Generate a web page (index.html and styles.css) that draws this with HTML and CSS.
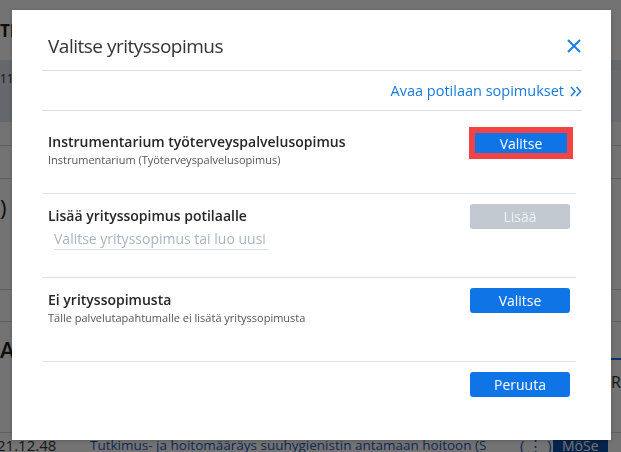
FILE: index.html
```html
<!DOCTYPE html>
<html lang="fi">
<head>
    <meta charset="UTF-8">
    <meta name="viewport" content="width=device-width, initial-scale=1.0">
    <title>Valitse yrityssopimus</title>
    <link rel="stylesheet" href="styles.css">
</head>
<body>
    <main class="page">
        <header class="page-head">
            <h1 class="page-title">TE</h1>
        </header>
        <section class="page-panel">
            <span class="panel-date">11.11.2021</span>
            <span class="panel-tab"></span>
        </section>
        <div class="page-row h23"></div>
        <div class="page-row h33"></div>
        <div class="page-row h110"><span class="page-big">(Ajanvaraus)</span></div>
        <div class="page-row h31"></div>
        <div class="page-row h110">
            <span class="page-big bold">Asiakirjat</span>
            <span class="page-tabs">Re</span>
        </div>
        <div class="page-entry">
            <span class="entry-time">21.12.48</span>
            <a class="entry-link" href="#">Tutkimus- ja hoitomääräys suuhygienistin antamaan hoitoon (S</a>
            <span class="entry-menu">( &#8942; )</span>
            <span class="entry-badge">MöSe</span>
        </div>
    </main>

    <div class="backdrop"></div>

    <section class="modal">
        <div class="modal-head">
            <h2 class="modal-title">Valitse yrityssopimus</h2>
            <button class="modal-close" aria-label="Sulje">
                <svg width="14" height="14" viewBox="0 0 14 14">
                    <path d="M1 1 L13 13 M13 1 L1 13" stroke="#1a7fe6" stroke-width="2" fill="none"/>
                </svg>
            </button>
        </div>
        <div class="modal-link">
            <a href="#">Avaa potilaan sopimukset
                <svg class="chev" width="12" height="11" viewBox="0 0 12 11">
                    <path d="M1 1 L5 5.5 L1 10 M6.5 1 L10.5 5.5 L6.5 10" stroke="#1a7ad8" stroke-width="1.5" fill="none"/>
                </svg>
            </a>
        </div>

        <div class="option first">
            <div class="option-text">
                <div class="option-title">Instrumentarium työterveyspalvelusopimus</div>
                <div class="option-sub">Instrumentarium (Työterveyspalvelusopimus)</div>
            </div>
            <button class="btn focused">Valitse</button>
        </div>

        <div class="option">
            <div class="option-text">
                <div class="option-title">Lisää yrityssopimus potilaalle</div>
                <input class="option-input" type="text" placeholder="Valitse yrityssopimus tai luo uusi">
            </div>
            <button class="btn disabled">Lisää</button>
        </div>

        <div class="option">
            <div class="option-text">
                <div class="option-title">Ei yrityssopimusta</div>
                <div class="option-sub">Tälle palvelutapahtumalle ei lisätä yrityssopimusta</div>
            </div>
            <button class="btn">Valitse</button>
        </div>

        <div class="modal-foot">
            <button class="btn">Peruuta</button>
        </div>
    </section>
</body>
</html>
```

FILE: styles.css
```css
body{
    margin: 0;
    font-family: "Open Sans", "Noto Sans", sans-serif;
    background-color: white;
    overflow: hidden;
}

/* page behind the dialog */

.page{
    width: 621px;
    height: 452px;
}

.page-head{
    height: 60px;
    display: flex;
    align-items: center;
    box-sizing: border-box;
}

.page-title{
    margin: 0;
    font-size: 17px;
    font-weight: 700;
    color: #222;
}

.page-panel{
    height: 62px;
    background-color: #dde5ef;
    display: flex;
    justify-content: space-between;
    padding-top: 10px;
    box-sizing: border-box;
}

.panel-date{
    font-size: 12px;
    color: #333;
}

.panel-tab{
    width: 10px;
    background-color: #e8eef5;
}

.page-row{
    border-bottom: 1px solid #d4d4d4;
    display: flex;
    justify-content: space-between;
    align-items: flex-start;
}

.h23{ height: 23px; }
.h33{ height: 32px; }
.h31{ height: 31px; }
.h110{ height: 110px; }

.page-big{
    font-size: 22px;
    color: #222;
    margin-top: 13px;
    margin-left: -120px;
}

.page-big.bold{
    margin-left: 0;
    margin-top: 12px;
    font-weight: 600;
}

.page-tabs{
    margin-top: 36px;
    width: 10px;
    padding: 12px 0 0 0;
    border-top: 1px solid #1a73e8;
    box-shadow: 0 24px 0 -23px #1a73e8 inset;
    font-size: 16px;
    color: #333;
    overflow: hidden;
    white-space: nowrap;
}

.page-entry{
    display: flex;
    align-items: center;
    height: 22px;
    padding-top: 1px;
    white-space: nowrap;
}

.entry-time{
    width: 93px;
    margin-left: -3px;
    font-size: 15px;
    color: #333;
}

.entry-link{
    font-size: 13.5px;
    color: #1a5bb8;
    text-decoration: none;
    width: 430px;
    overflow: hidden;
}

.entry-menu{
    width: 34px;
    font-size: 15px;
    color: #1a5bb8;
}

.entry-badge{
    background-color: #0b4fa8;
    color: white;
    font-size: 14px;
    padding: 0 9px;
    margin-left: -1px;
}

.backdrop{
    position: fixed;
    inset: 0;
    background-color: rgba(0, 0, 0, 0.55);
}

/* dialog */

.modal{
    position: absolute;
    left: 12px;
    top: 10px;
    width: 599px;
    height: 430px;
    box-sizing: border-box;
    padding: 0 29px 0 30px;
    background-color: white;
    box-shadow: 0 1px 4px rgba(0, 0, 0, 0.2);
}

.modal-head{
    display: flex;
    justify-content: space-between;
    align-items: center;
    padding: 22px 0 10px 6px;
    border-bottom: 1px solid #d6dee8;
}

.modal-title{
    margin: 0;
    font-size: 19px;
    letter-spacing: -0.5px;
    line-height: 28px;
    font-weight: 400;
    color: #333;
}

.modal-close{
    border: none;
    background: none;
    padding: 0;
    margin-right: 1px;
    display: flex;
    cursor: pointer;
}

.modal-link{
    height: 39px;
    display: flex;
    justify-content: flex-end;
    align-items: center;
    border-bottom: 1px solid #d6dee8;
}

.modal-link a{
    display: flex;
    align-items: center;
    font-size: 14.5px;
    color: #1a7ad8;
    text-decoration: none;
}

.chev{
    margin-left: 6px;
    margin-top: 2px;
}

.option{
    display: flex;
    justify-content: space-between;
    align-items: flex-start;
    height: 84px;
    box-sizing: border-box;
    margin-right: 6px;
    padding: 10px 6px 0 6px;
    border-bottom: 1px solid #dde3ea;
}

.option.first{
    height: 83px;
    padding-top: 19px;
}

.option-text{
    padding-top: 2px;
}

.option-title{
    font-size: 14px;
    line-height: 20px;
    font-weight: 600;
    color: #262626;
}

.option-sub{
    font-size: 11px;
    line-height: 16px;
    color: #555;
}

.option-input{
    margin: 2px 0 0 6px;
    width: 214px;
    height: 21px;
    padding: 0;
    border: none;
    border-bottom: 1px solid #d3dbe5;
    font-family: inherit;
    font-size: 14px;
    outline: none;
}

.option-input::placeholder{
    color: #a9b5c4;
}

.btn{
    width: 100px;
    height: 25px;
    padding: 0;
    border: none;
    border-radius: 3px;
    background-color: #0f74e6;
    color: white;
    font-family: inherit;
    font-size: 14px;
    cursor: pointer;
}

.btn.focused{
    width: 92px;
    height: 20px;
    margin: 3px 3px 2px 5px;
    border-radius: 0;
    outline: 6px solid #f24444;
}

.btn.disabled{
    background-color: #c3c9d1;
    color: #edf0f3;
}

.modal-foot{
    display: flex;
    justify-content: flex-end;
    margin-right: 6px;
    padding: 10px 6px 0 0;
}
```
